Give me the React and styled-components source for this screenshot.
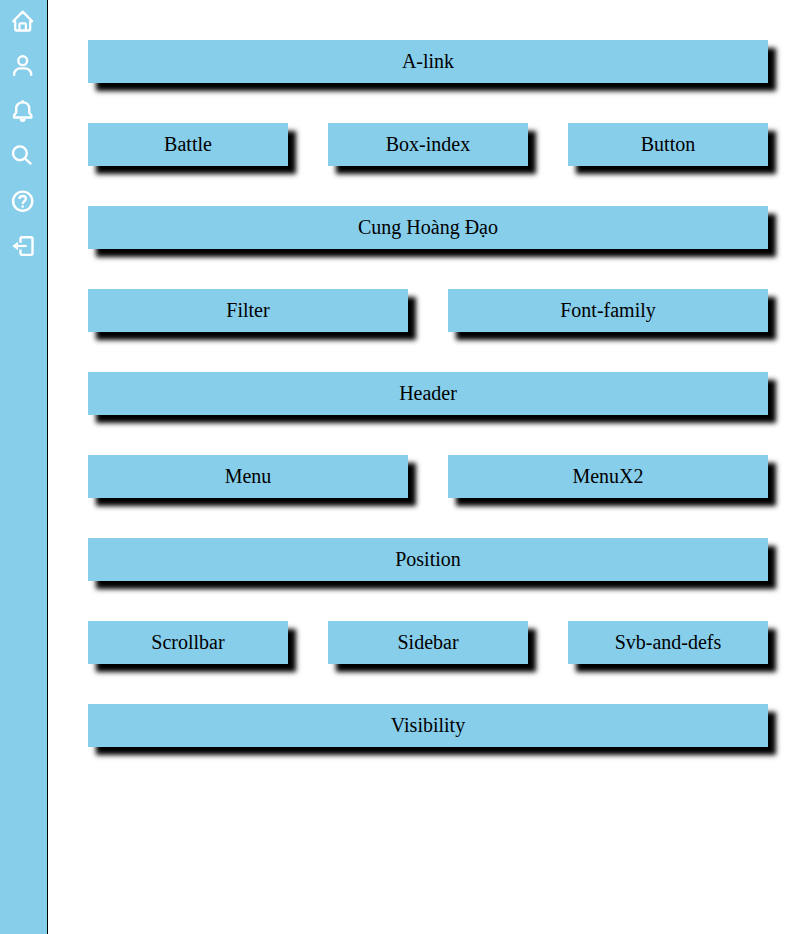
import React from "react";
import styled, { createGlobalStyle } from "styled-components";

const GlobalStyle = createGlobalStyle`
  * { box-sizing: border-box; }
  body { margin: 0; background: #fff; }
`;

const Page = styled.div`
  display: flex;
  min-height: 100vh;
  font-family: "Liberation Serif", "Times New Roman", serif;
`;

const Sidebar = styled.nav`
  flex: none;
  display: flex;
  flex-direction: column;
  gap: 21px;
  width: 48px;
  padding: 9px 0 0 11px;
  background: skyblue;
  border-right: 1px solid #000;
`;

const SidebarLink = styled.a`
  display: block;
  width: 24px;
  height: 24px;
  cursor: pointer;
`;

const Icon = styled.svg`
  display: block;
  width: 24px;
  height: 24px;
  fill: none;
  stroke: #fff;
  stroke-width: 2.4;
  stroke-linecap: round;
  stroke-linejoin: round;
`;

const Main = styled.main`
  flex: 1;
  display: flex;
  flex-direction: column;
  gap: 40px;
  padding: 40px 30px 40px 40px;
`;

const Row = styled.div`
  display: grid;
  grid-template-columns: repeat(${(p) => p.$columns}, 1fr);
  gap: 40px;
`;

const Box = styled.a`
  padding: 10px;
  background: skyblue;
  box-shadow: 8px 8px 5px #000;
  color: #000;
  font-size: 20px;
  line-height: 23px;
  text-align: center;
  cursor: pointer;
`;

const icons = [
  {
    name: "Home",
    shape: (
      <>
        <path d="M2.2 12.3 11.7 2.6l9.5 9.7h-2v8.2a1 1 0 0 1-1 1h-13a1 1 0 0 1-1-1v-8.2Z" strokeWidth="2.3" />
        <path d="M8.4 21.2v-5.6a1.2 1.2 0 0 1 1.2-1.2h4.1a1.2 1.2 0 0 1 1.2 1.2v5.6" strokeWidth="2.2" />
      </>
    ),
  },
  {
    name: "Profile",
    shape: (
      <>
        <circle cx="11.7" cy="6.7" r="4.4" />
        <path d="M3.1 21.8v-1.2a6.2 6.2 0 0 1 6.2-6.2h4.7a6.2 6.2 0 0 1 6.2 6.2v1.2" strokeLinecap="butt" />
      </>
    ),
  },
  {
    name: "Notifications",
    shape: (
      <>
        <path d="M11.7 2.3v1M11.7 3.4c-4 0-6.5 2.6-6.5 6.1v4L3.1 16.4v2.1h17.2v-2.1l-2.1-2.9v-4c0-3.5-2.5-6.1-6.5-6.1Z" />
        <path d="M8.7 20h6a3 3 0 0 1-6 0Z" fill="#fff" stroke="none" />
      </>
    ),
  },
  {
    name: "Search",
    shape: (
      <>
        <circle cx="8.9" cy="9.3" r="6.9" />
        <path d="m14.1 14.6 6.1 5.6" strokeLinecap="butt" />
      </>
    ),
  },
  {
    name: "Help",
    shape: (
      <>
        <circle cx="11.7" cy="12.2" r="9.6" />
        <path d="M8.4 10c0-2 1.4-3 3.3-3s3.2 1.2 3.2 2.8c0 2.3-3.2 2.5-3.2 5.2" strokeLinecap="butt" />
        <path d="M11.7 16.4v2.2" strokeLinecap="butt" />
      </>
    ),
  },
  {
    name: "Log out",
    shape: (
      <>
        <path d="M9.5 8.7V4.7a1.5 1.5 0 0 1 1.5-1.5h9a1.5 1.5 0 0 1 1.5 1.5v14.7a1.5 1.5 0 0 1-1.5 1.5h-9a1.5 1.5 0 0 1-1.5-1.5v-4" strokeLinecap="butt" />
        <path d="M5 12h10.7" strokeLinecap="butt" strokeWidth="2.2" />
        <path d="M1.3 12 7 7.8v8.4Z" fill="#fff" stroke="none" />
      </>
    ),
  },
];

const rows = [
  ["A-link"],
  ["Battle", "Box-index", "Button"],
  ["Cung Hoàng Đạo"],
  ["Filter", "Font-family"],
  ["Header"],
  ["Menu", "MenuX2"],
  ["Position"],
  ["Scrollbar", "Sidebar", "Svb-and-defs"],
  ["Visibility"],
];

export default function App() {
  return (
    <>
      <GlobalStyle />
      <Page>
        <Sidebar>
          {icons.map(({ name, shape }) => (
            <SidebarLink key={name} aria-label={name}>
              <Icon viewBox="0 0 24 24">{shape}</Icon>
            </SidebarLink>
          ))}
        </Sidebar>
        <Main>
          {rows.map((labels) => (
            <Row key={labels[0]} $columns={labels.length}>
              {labels.map((label) => (
                <Box key={label}>{label}</Box>
              ))}
            </Row>
          ))}
        </Main>
      </Page>
    </>
  );
}
